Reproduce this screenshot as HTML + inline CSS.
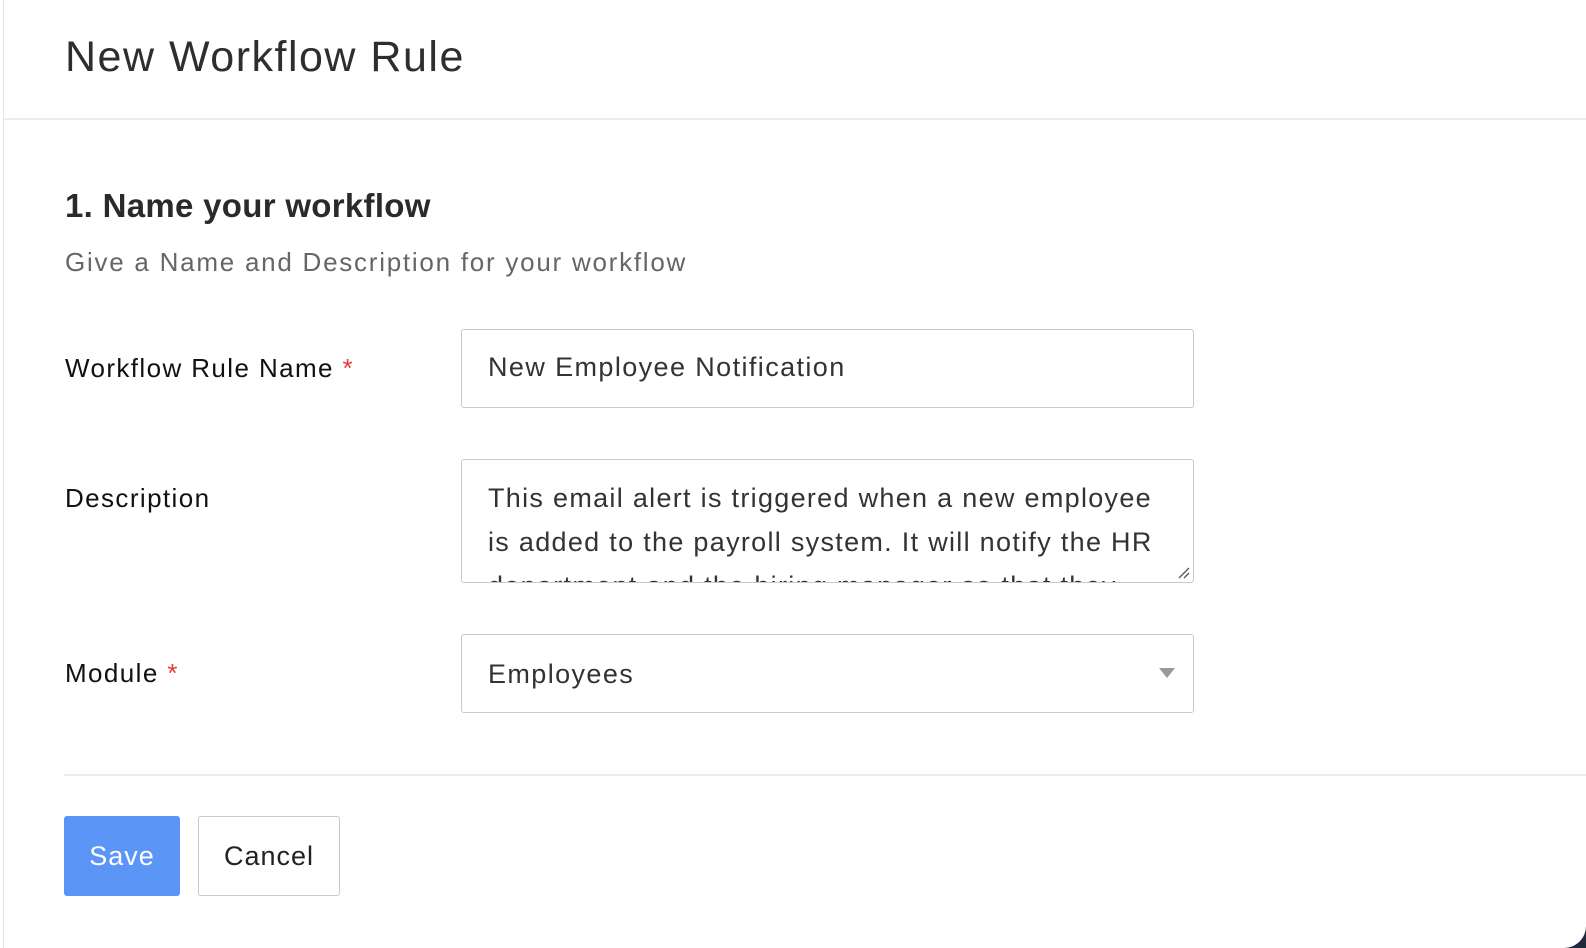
<!DOCTYPE html>
<html><head><style>
html,body{margin:0;padding:0;width:1586px;height:948px;overflow:hidden;background:#1e2a3a;font-family:"Liberation Sans",sans-serif;}
.card{position:absolute;left:0;top:0;width:1586px;height:948px;background:#fff;border-bottom-right-radius:22px;}
.lb{position:absolute;left:3px;top:0;width:1px;height:948px;background:#e6e6e6;}
.t{position:absolute;white-space:nowrap;letter-spacing:1.4px;}
.box{position:absolute;left:461px;width:733px;border:1px solid #c9c9c9;border-radius:3px;background:#fff;box-sizing:border-box;overflow:hidden;}
</style></head><body>
<div class="card">
<div class="lb"></div>
<div class="t" style="left:65px;top:33px;font-size:43px;color:#2e2e2e;letter-spacing:1.5px">New Workflow Rule</div>
<div style="position:absolute;left:4px;top:118px;width:1582px;height:2px;background:#ececec"></div>
<div class="t" style="left:65px;top:187px;font-size:33px;color:#2a2a2a;font-weight:bold;letter-spacing:0.3px">1. Name your workflow</div>
<div class="t" style="left:65px;top:247px;font-size:26px;color:#666;letter-spacing:1.75px">Give a Name and Description for your workflow</div>
<div class="t" style="left:65px;top:353px;font-size:26px;color:#111;">Workflow Rule Name <span style="color:#e53935">*</span></div>
<div class="box" style="top:329px;height:79px;"><div class="t" style="left:26px;top:22px;font-size:27px;color:#333">New Employee Notification</div></div>
<div class="t" style="left:65px;top:483px;font-size:26px;color:#111;">Description</div>
<div class="box" style="top:459px;height:124px;"><div style="position:absolute;left:26px;top:16px;width:680px;font-size:27px;line-height:44px;color:#333;letter-spacing:1.3px">This email alert is triggered when a new employee is added to the payroll system. It will notify the HR department and the hiring manager so that they</div>
<svg style="position:absolute;right:2px;bottom:2px" width="14" height="14"><path d="M2 12L12 2M7 12L12 7" stroke="#555" stroke-width="1.3"/></svg></div>
<div class="t" style="left:65px;top:658px;font-size:26px;color:#111;">Module <span style="color:#e53935">*</span></div>
<div class="box" style="top:634px;height:79px;"><div class="t" style="left:26px;top:24px;font-size:27px;color:#333">Employees</div>
<svg style="position:absolute;left:697px;top:33px" width="16" height="11"><path d="M0 0H16L8 10Z" fill="#999"/></svg></div>
<div style="position:absolute;left:64px;top:774px;width:1522px;height:2px;background:#ececec"></div>
<div style="position:absolute;left:64px;top:816px;width:116px;height:80px;background:#5b95f5;border-radius:3px;color:#fff;font-size:27px;line-height:80px;text-align:center;letter-spacing:1px">Save</div>
<div style="position:absolute;left:198px;top:816px;width:142px;height:80px;box-sizing:border-box;border:1px solid #c9c9c9;border-radius:3px;color:#222;font-size:27px;line-height:78px;text-align:center;letter-spacing:1px">Cancel</div>
</div>
</body></html>
